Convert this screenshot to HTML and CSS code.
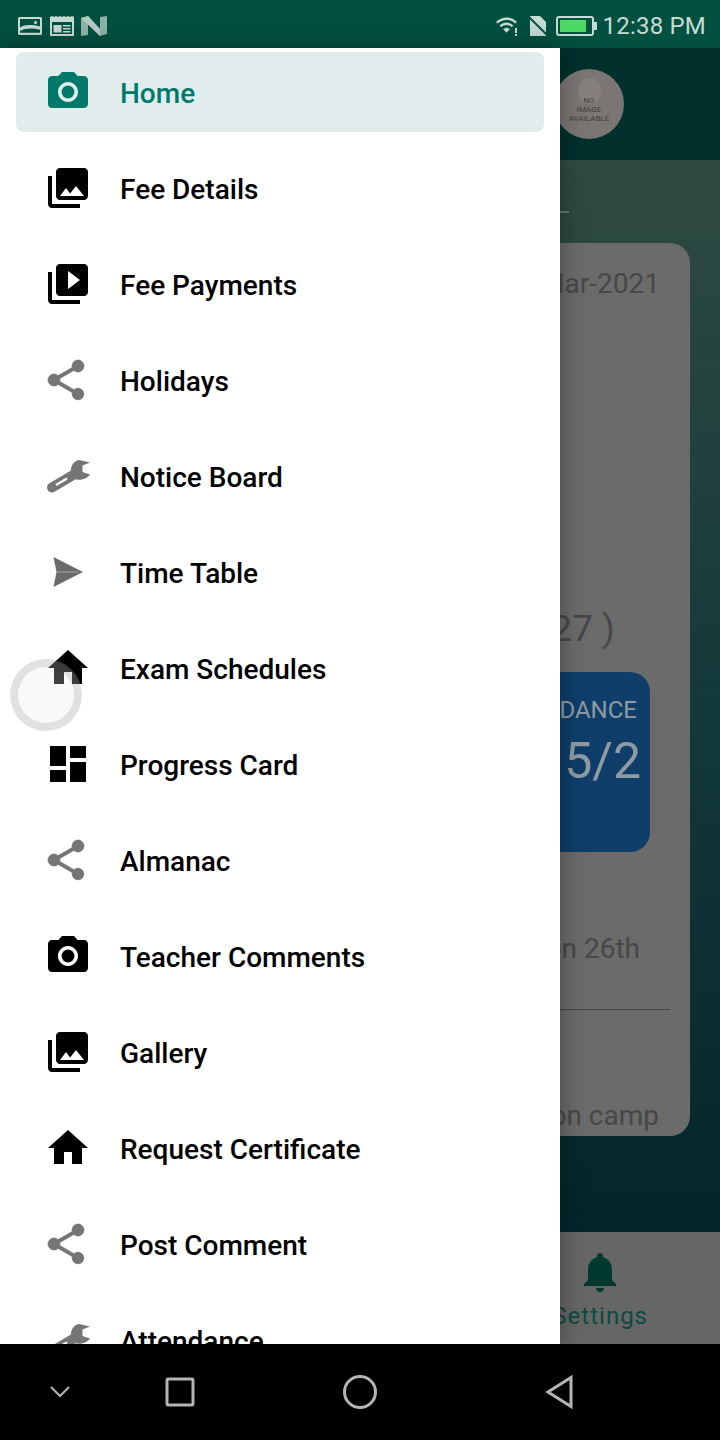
FILE: index.html
```html
<!DOCTYPE html>
<html lang="en">
  <head>
    <meta charset="UTF-8" />
    <title>School App</title>
    <link rel="stylesheet" href="styles.css">
  </head>
  <body>
    <div class="screen">
      <!-- Status bar -->
      <div class="status-bar">
        <svg class="st-icon st-pic" viewBox="0 0 24 18"><path fill-rule="evenodd" d="M1.5 0h21A1.5 1.5 0 0 1 24 1.5v15a1.5 1.5 0 0 1-1.500 1.500h-21A1.500 1.500 0 0 1 0 16.500v-15A1.500 1.500 0 0 1 1.500 0zM2 2v8.500C7 7.500 14 7.500 22 9.500V2zM2 15.800h20v-3C15 10.800 7 11 2 14z"/><circle cx="17.500" cy="5.500" r="1.500"/></svg>
        <svg class="st-icon st-news" viewBox="0 0 24 20"><path fill-rule="evenodd" d="M0 1l2-1 2 1 2-1 2 1 2-1 2 1 2-1 2 1 2-1 2 1 2-1 2 1v19H0zM2 6v12h20V6zM3.500 9h8v7.500h-8zM13 9h7.500v1.500H13zM13 12h7.500v1.500H13zM13 15h7.500v1.500H13z"/></svg>
        <svg class="st-icon st-n" viewBox="0 0 26 20"><path d="M0 2l7-2 12 13V1l7-1v18l-7 2L7 8v11l-7 1z"/><path class="st-n-fold" d="M7 0l12 13v7L0 2z"/></svg>
        <span class="st-spacer"></span>
        <svg class="st-icon st-wifi" viewBox="0 0 24 20"><path d="M0 6c6-6 15-6 21 0l-1.600 1.600c-5-4.800-12.800-4.800-17.800 0zM3.600 9.600c4-4 9.800-4 13.800 0l-1.600 1.600c-3.200-3-7.400-3-10.600 0zM7.200 13.200c2-2 4.600-2 6.600 0l-3.300 3.600zM19 12h2v5h-2zM19 18h2v2h-2z" /></svg>
        <svg class="st-icon st-sim" viewBox="0 0 20 20"><path d="M1 0h10l6 6v14H1z"/><path class="st-slash" d="M0 1l19 19"/></svg>
        <div class="battery"><div class="battery-fill"></div></div>
        <span class="st-time">12:38 PM</span>
      </div>

      <!-- Page behind the drawer -->
      <div class="app-bar">
        <div class="avatar">
          <div class="avatar-head"></div>
          <div class="avatar-text">NO<br>IMAGE<br>AVAILABLE</div>
        </div>
      </div>

      <div class="content">
        <div class="content-rule"></div>
        <div class="card">
          <div class="card-date">01-Mar-2021</div>
          <div class="card-count">( 27 )</div>
          <div class="attendance">
            <div class="attendance-label">ATTENDANCE</div>
            <div class="attendance-value">5/2</div>
          </div>
          <div class="card-line card-line-first">Holiday on 26th</div>
          <div class="card-divider"></div>
          <div class="card-line card-line-last">Vacation camp</div>
        </div>
      </div>

      <div class="bottom-tabs">
        <div class="tab">
          <svg class="tab-icon" viewBox="0 0 24 24"><path d="M12 22c1.100 0 2-.9 2-2h-4c0 1.100.9 2 2 2zm6-6v-5c0-3.070-1.630-5.640-4.500-6.320V4c0-.83-.67-1.500-1.500-1.500s-1.500.67-1.500 1.500v.68C7.640 5.360 6 7.920 6 11v5l-2 2v1h16v-1l-2-2z"/></svg>
          <div class="tab-label">Settings</div>
        </div>
      </div>

      <!-- Android nav bar -->
      <div class="nav-bar">
        <svg class="nav-icon nav-down" viewBox="0 0 48 48"><path d="M15 19l9 9 9-9"/></svg>
        <svg class="nav-icon nav-recent" viewBox="0 0 48 48"><rect x="11" y="11" width="26" height="26" rx="1.500"/></svg>
        <svg class="nav-icon nav-home" viewBox="0 0 48 48"><ellipse cx="24" cy="24" rx="15.500" ry="15.500"/></svg>
        <svg class="nav-icon nav-back" viewBox="0 0 48 48"><path d="M35 9.500v29L12 24z"/></svg>
      </div>

      <!-- Drawer -->
      <div class="drawer">
        <ul class="menu">
          <li class="menu-item active">
            <svg class="icon" viewBox="0 0 24 24"><circle cx="12" cy="12" r="3.200"/><path d="M9 2L7.170 4H4c-1.100 0-2 .9-2 2v12c0 1.100.9 2 2 2h16c1.100 0 2-.9 2-2V6c0-1.100-.9-2-2-2h-3.170L15 2H9zm3 15c-2.760 0-5-2.240-5-5s2.240-5 5-5 5 2.240 5 5-2.240 5-5 5z"/></svg>
            <span>Home</span>
          </li>
          <li class="menu-item">
            <svg class="icon" viewBox="0 0 24 24"><path d="M22 16V4c0-1.100-.9-2-2-2H8c-1.100 0-2 .9-2 2v12c0 1.100.9 2 2 2h12c1.100 0 2-.9 2-2zm-11-4l2.030 2.710L16 11l4 5H8l3-4zM2 6v14c0 1.100.9 2 2 2h14v-2H4V6H2z"/></svg>
            <span>Fee Details</span>
          </li>
          <li class="menu-item">
            <svg class="icon" viewBox="0 0 24 24"><path d="M4 6H2v14c0 1.100.9 2 2 2h14v-2H4V6zm16-4H8c-1.100 0-2 .9-2 2v12c0 1.100.9 2 2 2h12c1.100 0 2-.9 2-2V4c0-1.100-.9-2-2-2zm-8 12.500v-9l6 4.500-6 4.500z"/></svg>
            <span>Fee Payments</span>
          </li>
          <li class="menu-item">
            <svg class="icon grey share" viewBox="1 0 24 24"><path d="M18 16.080c-.76 0-1.440.3-1.960.77L8.910 12.700c.05-.23.09-.46.09-.7s-.04-.47-.09-.7l7.050-4.110c.54.5 1.250.81 2.040.81 1.660 0 3-1.340 3-3s-1.340-3-3-3-3 1.340-3 3c0 .24.04.47.09.7L8.040 9.810C7.500 9.310 6.790 9 6 9c-1.660 0-3 1.340-3 3s1.340 3 3 3c.79 0 1.500-.31 2.040-.81l7.120 4.160c-.05.21-.08.43-.08.65 0 1.610 1.310 2.920 2.920 2.920 1.610 0 2.920-1.310 2.920-2.920s-1.310-2.920-2.920-2.920z"/></svg>
            <span>Holidays</span>
          </li>
          <li class="menu-item">
            <svg class="icon grey" viewBox="0 0 48 48"><path class="wrench" d="M8 35.500L30 22.500"/><path d="M27 22C26 15 29 9 35 8L46 10.500 38.500 13.500 38.500 20 46 22.500C43 27 35 29 31 27z"/><path class="wrench-slot" d="M12 33L23 26.500"/></svg>
            <span>Notice Board</span>
          </li>
          <li class="menu-item">
            <svg class="icon grey-send" viewBox="0 0 48 48"><path d="M9.500 9L39 24 9.500 39 12.500 24z"/><path class="send-line" d="M13 24H34"/></svg>
            <span>Time Table</span>
          </li>
          <li class="menu-item">
            <svg class="icon" viewBox="0 0 24 24"><path d="M10 20v-6h4v6h5v-8h3L12 3 2 12h3v8z"/></svg>
            <span>Exam Schedules</span>
          </li>
          <li class="menu-item">
            <svg class="icon" viewBox="0 0 24 24"><path d="M3 13h8V3H3v10zm0 8h8v-6H3v6zm10 0h8V11h-8v10zm0-18v6h8V3h-8z"/></svg>
            <span>Progress Card</span>
          </li>
          <li class="menu-item">
            <svg class="icon grey share" viewBox="1 0 24 24"><path d="M18 16.080c-.76 0-1.440.3-1.960.77L8.910 12.700c.05-.23.09-.46.09-.7s-.04-.47-.09-.7l7.050-4.110c.54.5 1.250.81 2.040.81 1.660 0 3-1.340 3-3s-1.340-3-3-3-3 1.340-3 3c0 .24.04.47.09.7L8.040 9.810C7.500 9.310 6.790 9 6 9c-1.660 0-3 1.340-3 3s1.340 3 3 3c.79 0 1.500-.31 2.040-.81l7.120 4.160c-.05.21-.08.43-.08.65 0 1.610 1.310 2.920 2.920 2.920 1.610 0 2.920-1.310 2.920-2.920s-1.310-2.920-2.920-2.920z"/></svg>
            <span>Almanac</span>
          </li>
          <li class="menu-item">
            <svg class="icon" viewBox="0 0 24 24"><circle cx="12" cy="12" r="3.200"/><path d="M9 2L7.170 4H4c-1.100 0-2 .9-2 2v12c0 1.100.9 2 2 2h16c1.100 0 2-.9 2-2V6c0-1.100-.9-2-2-2h-3.170L15 2H9zm3 15c-2.760 0-5-2.240-5-5s2.240-5 5-5 5 2.240 5 5-2.240 5-5 5z"/></svg>
            <span>Teacher Comments</span>
          </li>
          <li class="menu-item">
            <svg class="icon" viewBox="0 0 24 24"><path d="M22 16V4c0-1.100-.9-2-2-2H8c-1.100 0-2 .9-2 2v12c0 1.100.9 2 2 2h12c1.100 0 2-.9 2-2zm-11-4l2.030 2.710L16 11l4 5H8l3-4zM2 6v14c0 1.100.9 2 2 2h14v-2H4V6H2z"/></svg>
            <span>Gallery</span>
          </li>
          <li class="menu-item">
            <svg class="icon" viewBox="0 0 24 24"><path d="M10 20v-6h4v6h5v-8h3L12 3 2 12h3v8z"/></svg>
            <span>Request Certificate</span>
          </li>
          <li class="menu-item">
            <svg class="icon grey share" viewBox="1 0 24 24"><path d="M18 16.080c-.76 0-1.440.3-1.960.77L8.910 12.700c.05-.23.09-.46.09-.7s-.04-.47-.09-.7l7.050-4.110c.54.5 1.250.81 2.040.81 1.660 0 3-1.340 3-3s-1.340-3-3-3-3 1.340-3 3c0 .24.04.47.09.7L8.040 9.810C7.500 9.310 6.790 9 6 9c-1.660 0-3 1.340-3 3s1.340 3 3 3c.79 0 1.500-.31 2.040-.81l7.120 4.160c-.05.21-.08.43-.08.65 0 1.610 1.310 2.920 2.920 2.920 1.610 0 2.920-1.310 2.920-2.920s-1.310-2.920-2.920-2.920z"/></svg>
            <span>Post Comment</span>
          </li>
          <li class="menu-item">
            <svg class="icon grey" viewBox="0 0 48 48"><path class="wrench" d="M8 35.500L30 22.500"/><path d="M27 22C26 15 29 9 35 8L46 10.500 38.500 13.500 38.500 20 46 22.500C43 27 35 29 31 27z"/><path class="wrench-slot" d="M12 33L23 26.500"/></svg>
            <span>Attendance</span>
          </li>
        </ul>
        <div class="ripple"></div>
      </div>
    </div>
  </body>
</html>
```

FILE: styles.css
```css
* {
  box-sizing: border-box;
}
body {
  margin: 0;
  font-family: Roboto, sans-serif;
  background: #000;
}
.screen {
  position: relative;
  width: 720px;
  height: 1440px;
  overflow: hidden;
  display: flex;
  flex-direction: column;
}

/* status bar */
.status-bar {
  height: 48px;
  background: #02503f;
  display: flex;
  align-items: center;
  padding: 4px 14px 0 18px;
  color: #c6dbd4;
}
.st-icon {
  fill: #c6dbd4;
  display: block;
}
.st-pic {
  width: 24px;
  height: 18px;
}
.st-news {
  width: 24px;
  height: 20px;
  margin-left: 8px;
}
.st-n {
  width: 26px;
  height: 20px;
  margin-left: 7px;
  fill: #8fb3a8;
}
.st-n-fold {
  fill: #b4cbc4;
}
.st-spacer {
  flex: 1;
}
.st-wifi {
  width: 24px;
  height: 20px;
}
.st-sim {
  width: 20px;
  height: 20px;
  margin-left: 9px;
}
.st-slash {
  stroke: #02503f;
  stroke-width: 2;
}
.battery {
  width: 38px;
  height: 20px;
  margin-left: 7px;
  border: 2px solid #c6dbd4;
  border-radius: 3px;
  padding: 2px;
  position: relative;
}
.battery::after {
  content: "";
  position: absolute;
  right: -5px;
  top: 4px;
  width: 3px;
  height: 8px;
  background: #c6dbd4;
}
.battery-fill {
  width: 26px;
  height: 100%;
  background: #4cd964;
}
.st-time {
  font-size: 24px;
  margin-left: 9px;
  letter-spacing: 0.2px;
}

/* page behind the drawer */
.app-bar {
  height: 112px;
  background: #02302c;
  display: flex;
  justify-content: flex-end;
  align-items: center;
  padding: 0 96px 0 0;
}
.avatar {
  width: 70px;
  height: 70px;
  border-radius: 50%;
  background: #7b7674;
  display: flex;
  flex-direction: column;
  align-items: center;
  overflow: hidden;
  position: relative;
  padding-top: 9px;
}
.avatar-head {
  width: 23px;
  height: 26px;
  border-radius: 11px;
  background: #85807f;
}
.avatar-text {
  position: absolute;
  top: 27px;
  left: 0;
  right: 0;
  font-size: 8px;
  line-height: 9px;
  text-align: center;
  color: #3f3b3a;
}
.content {
  flex: 1;
  background: linear-gradient(#2f4a42, #14393a 50%, #03262b);
  padding: 52px 30px 0;
  position: relative;
}
.content-rule {
  position: absolute;
  top: 51px;
  left: 540px;
  width: 29px;
  height: 2px;
  background: #5f7a70;
}
.card {
  height: 893px;
  margin-top: 31px;
  background: #6b6b6b;
  border-radius: 20px;
  display: flex;
  flex-direction: column;
  align-items: flex-end;
  color: #474747;
}
.card-date {
  margin: 24px 30px 0 0;
  font-size: 28px;
  line-height: 34px;
  white-space: nowrap;
}
.card-count {
  margin: 306px 75px 0 0;
  font-size: 37px;
  line-height: 44px;
}
.attendance {
  width: 580px;
  height: 180px;
  margin: 21px 40px 0 0;
  background: #0e3e69;
  border-radius: 20px;
  color: #8f9aa3;
  text-align: right;
}
.attendance-label {
  margin: 23px 13px 0 0;
  font-size: 24px;
  line-height: 30px;
}
.attendance-value {
  margin: 5px 9px 0 0;
  font-size: 50px;
  line-height: 62px;
}
.card-line {
  font-size: 28px;
  line-height: 34px;
  white-space: nowrap;
}
.card-line-first {
  margin: 80px 50px 0 0;
}
.card-divider {
  width: 580px;
  height: 1px;
  margin: 43px 20px 0 0;
  background: #454545;
}
.card-line-last {
  margin: 89px 31px 0 0;
}
.bottom-tabs {
  height: 112px;
  background: #666;
  display: flex;
  justify-content: flex-end;
  padding-right: 72px;
}
.tab {
  display: flex;
  flex-direction: column;
  align-items: center;
  color: #0d4a40;
}
.tab-icon {
  width: 48px;
  height: 48px;
  margin-top: 16px;
  fill: #01392f;
}
.tab-label {
  font-size: 24px;
  line-height: 28px;
  letter-spacing: 1px;
  margin-top: 6px;
}

/* nav bar */
.nav-bar {
  height: 96px;
  background: #000;
  display: flex;
  align-items: center;
  padding: 0 0 0 36px;
  flex-shrink: 0;
}
.nav-icon {
  width: 48px;
  height: 48px;
  fill: none;
  stroke: #b4b4b4;
  stroke-width: 3;
}
.nav-down {
  stroke-width: 2;
}
.nav-recent {
  margin-left: 72px;
}
.nav-home {
  margin-left: 132px;
}
.nav-back {
  margin-left: 152px;
}

/* drawer */
.drawer {
  position: absolute;
  top: 48px;
  left: 0;
  bottom: 96px;
  width: 560px;
  background: #fff;
  overflow: hidden;
  box-shadow: 0 0 24px rgba(0, 0, 0, 0.35);
}
.menu {
  list-style: none;
  margin: 0;
  padding: 4px 16px 0;
}
.menu-item {
  height: 80px;
  margin-bottom: 16px;
  padding-left: 28px;
  border-radius: 8px;
  display: flex;
  align-items: center;
  gap: 28px;
  font-size: 28px;
  font-weight: 500;
  color: #000;
}
.menu-item span {
  padding-top: 2px;
}
.menu-item.active {
  background: #e0edec;
  color: #00796b;
}
.icon {
  width: 48px;
  height: 48px;
  flex-shrink: 0;
  fill: currentColor;
}
.icon.grey {
  fill: #757575;
}
.icon.share path {
  stroke: #757575;
  stroke-width: 0.3;
}
.icon.grey-send {
  fill: #6b6b6b;
}
.send-line {
  fill: none;
  stroke: #a8a8a8;
  stroke-width: 1;
}
.wrench {
  fill: none;
  stroke: #757575;
  stroke-width: 10;
  stroke-linecap: round;
}
.wrench-slot {
  fill: none;
  stroke: #fff;
  stroke-width: 2.500;
}
.ripple {
  position: absolute;
  left: 10px;
  top: 611px;
  width: 72px;
  height: 72px;
  border-radius: 50%;
  border: 8px solid rgba(168, 168, 168, 0.35);
  background: rgba(235, 235, 235, 0.27);
  background-clip: padding-box;
}
```
